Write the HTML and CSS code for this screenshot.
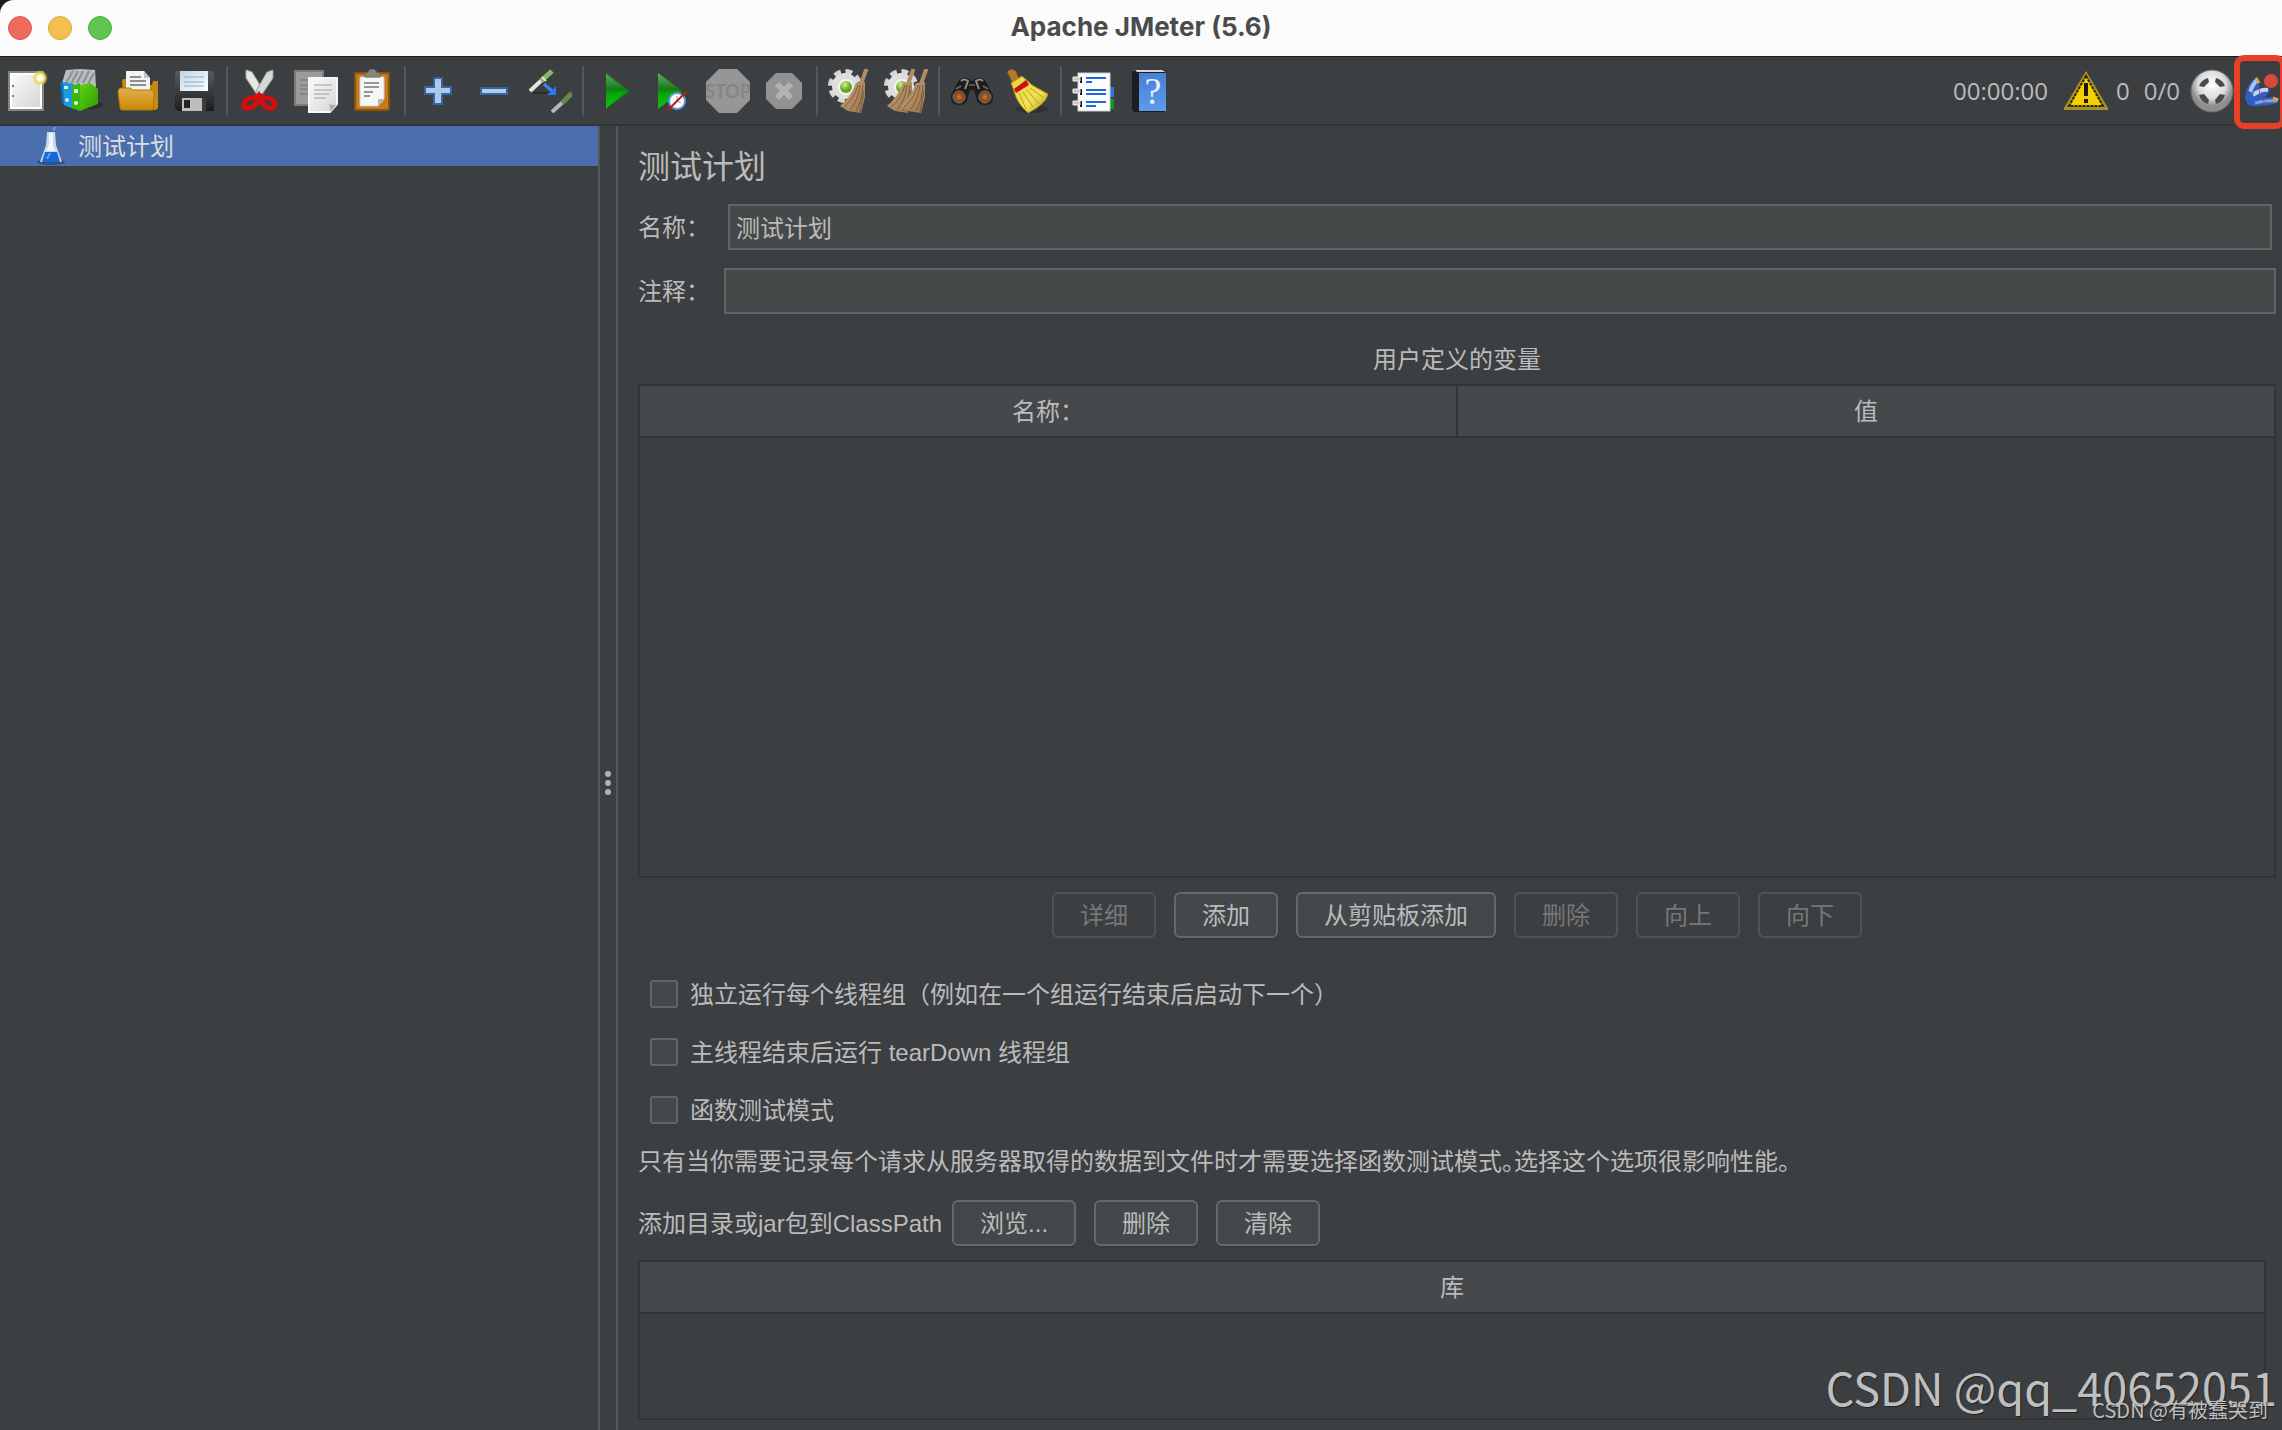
FILE: index.html
```html
<!DOCTYPE html>
<html lang="zh-CN">
<head>
<meta charset="utf-8">
<title>Apache JMeter (5.6)</title>
<link rel="stylesheet" href="styles.css">
</head>
<body>
<svg class="defs" width="0" height="0" aria-hidden="true">
  <defs>
    <linearGradient id="paper" x1="0" y1="0" x2="1" y2="1"><stop offset="0" stop-color="#fafafa"/><stop offset="1" stop-color="#d6d6d6"/></linearGradient>
    <linearGradient id="amber" x1="0" y1="0" x2="0" y2="1"><stop offset="0" stop-color="#e3b04f"/><stop offset="1" stop-color="#c98a06"/></linearGradient>
    <linearGradient id="black" x1="0" y1="0" x2="0" y2="1"><stop offset="0" stop-color="#5b5b5b"/><stop offset="1" stop-color="#1d1d1d"/></linearGradient>
    <linearGradient id="label" x1="0" y1="0" x2="1" y2="1"><stop offset="0" stop-color="#bcd6ea"/><stop offset="1" stop-color="#ffffff"/></linearGradient>
    <linearGradient id="play" x1="0" y1="0" x2="0" y2="1"><stop offset="0" stop-color="#5fae62"/><stop offset=".45" stop-color="#177a1a"/><stop offset=".55" stop-color="#07a307"/><stop offset="1" stop-color="#12c512"/></linearGradient>
    <linearGradient id="green" x1="0" y1="0" x2="1" y2="1"><stop offset="0" stop-color="#5fd30f"/><stop offset="1" stop-color="#2f9a05"/></linearGradient>
    <linearGradient id="book" x1="0" y1="0" x2="0" y2="1"><stop offset="0" stop-color="#4581d6"/><stop offset="1" stop-color="#5c9bea"/></linearGradient>
    <linearGradient id="straw" x1="0" y1="0" x2="1" y2="1"><stop offset="0" stop-color="#c8a47a"/><stop offset="1" stop-color="#9a7650"/></linearGradient>
    <linearGradient id="yellow" x1="0" y1="0" x2="1" y2="1"><stop offset="0" stop-color="#e8d23a"/><stop offset=".6" stop-color="#f2e25a"/><stop offset="1" stop-color="#b59a10"/></linearGradient>
    <radialGradient id="spark"><stop offset="0" stop-color="#fff"/><stop offset=".35" stop-color="#fffbd0"/><stop offset=".6" stop-color="#e8d85a"/><stop offset="1" stop-color="#e8d85a" stop-opacity="0"/></radialGradient>
    <radialGradient id="ball" cx=".4" cy=".3"><stop offset="0" stop-color="#d2f08a"/><stop offset="1" stop-color="#63a51c"/></radialGradient>
    <radialGradient id="silver" cx=".5" cy=".35"><stop offset="0" stop-color="#fff"/><stop offset=".65" stop-color="#dcdcdc"/><stop offset="1" stop-color="#8e8e8e"/></radialGradient>
    <radialGradient id="lens"><stop offset="0" stop-color="#c27a3c"/><stop offset="1" stop-color="#6d3610"/></radialGradient>
    <symbol id="gear" viewBox="0 0 36 36"><circle cx="18" cy="18" r="14" fill="none" stroke="#d6d6d6" stroke-width="6" stroke-dasharray="6.5 4.5"/><circle cx="18" cy="18" r="13" fill="#dedede"/><circle cx="19" cy="19" r="8" fill="#f3f3f3"/><circle cx="19" cy="19" r="6" fill="url(#ball)"/></symbol>
    <symbol id="besom" viewBox="0 0 30 44"><path d="M26 1 L21 15" stroke="#b08c66" stroke-width="4" stroke-linecap="round"/><path d="M16 14 L25 13 L25 28 L21 44 L8 42 L0 37 Q10 29 16 14Z" fill="url(#straw)"/><path d="M18 16 Q14 30 4 38 M20 16 Q18 32 10 41 M23 16 Q22 32 16 42 M24 22 L20 43" stroke="#7d5c3b" stroke-width="1" fill="none"/></symbol>
  </defs>
</svg>

<div class="window">
  <header class="titlebar">
    <div class="lights">
      <button class="light close" aria-label="关闭"></button>
      <button class="light minimize" aria-label="最小化"></button>
      <button class="light zoom" aria-label="缩放"></button>
    </div>
    <div class="title">Apache JMeter (5.6)</div>
  </header>

  <div class="toolbar">
    <div class="tools">
      <button class="tool" aria-label="新建"><svg viewBox="0 0 44 44"><rect x="5" y="3" width="34" height="38" fill="#fff" stroke="#85877f" stroke-width="2"/><rect x="8" y="6" width="28" height="32" fill="url(#paper)"/><path d="M8 17h2M8 27h2" stroke="#777" stroke-width="2"/><circle cx="36" cy="9" r="8" fill="url(#spark)"/></svg></button>
      <button class="tool" aria-label="模板"><svg viewBox="0 0 44 44"><ellipse cx="30" cy="36" rx="13" ry="4" fill="#2c2e30"/><path d="M2 14 L6 1 L20 0 L35 1 L36 18 L12 24Z" fill="#b9bdbf"/><path d="M6 14 L13 2 M11 15 L18 2 M17 14 L23 2 M23 14 L29 2 M28 15 L34 4" stroke="#8a8f93" stroke-width="2"/><path d="M0 13 L8 15 L8 38 L2 34Z" fill="#0b6fb8"/><path d="M3 13 L14 15 L14 40 L4 36Z" fill="#1f97de"/><path d="M12 17 L20 14 L20 42 L12 39Z" fill="#37b80a"/><path d="M20 16 L30 14 L38 20 L38 35 L20 42Z" fill="url(#green)"/><path d="M14 20 h4 v4 h-4z M4 17h4v3h-4z" fill="#d8f5c8"/><circle cx="16" cy="34" r="2" fill="#e4fbd6"/><circle cx="7" cy="31" r="2" fill="#cfeaff"/></svg></button>
      <button class="tool" aria-label="打开"><svg viewBox="0 0 44 44"><path d="M6 12 Q6 10 8 10 H14 V16 H36 L37 12 H42 V38 Q42 41 38 41 H8 Z" fill="#c48a12"/><path d="M10 2 H28 L34 9 V24 H10Z" fill="#f2f2f2"/><path d="M28 2 L34 9 H28Z" fill="#c4c4c4"/><path d="M14 8h11M14 12h16M14 16h16" stroke="#8e8e8e" stroke-width="2"/><path d="M2 23 Q2 19 5 19 H14 L17 21 H36 Q38 21 38 24 L37 41 H6 Q4 41 4 38Z" fill="url(#amber)" stroke="#b37a04"/></svg></button>
      <button class="tool" aria-label="保存"><svg viewBox="0 0 44 44"><path d="M5 2 H40 Q42 2 42 4 V42 H6 L3 39 V4 Q3 2 5 2Z" fill="url(#black)"/><rect x="8" y="2" width="28" height="20" fill="url(#label)"/><path d="M12 8h20M12 13h20M12 17h20" stroke="#8cabc4" stroke-width="1"/><rect x="10" y="29" width="22" height="13" fill="#bdbdbd"/><rect x="12" y="31" width="6" height="8" fill="#222"/><path d="M30 29h4v13h-4z" fill="#3b3b3b"/></svg></button>
    </div>
    <i class="sep"></i>
    <div class="tools">
      <button class="tool" aria-label="剪切"><svg viewBox="0 0 44 44"><path d="M8 1 L14 3 L25 21 L20 27 L8 9Z" fill="#e6e7e4" stroke="#a5a7a3"/><path d="M35 1 L29 3 L18 22 L23 27 L35 9Z" fill="#d6d8d4" stroke="#999b97"/><circle cx="21" cy="23" r="1" fill="#666"/><path d="M20 27 Q19 38 11 39 Q5 40 6 35 Q7 30 13 29 Q17 29 21 26 Q25 29 30 29 Q36 30 37 35 Q37 40 31 39 Q24 38 22 27" fill="none" stroke="#d40d0d" stroke-width="5" stroke-linejoin="round"/></svg></button>
      <button class="tool" aria-label="复制"><svg viewBox="0 0 44 44"><rect x="1" y="2" width="28" height="34" fill="#9a9b9a" stroke="#7a7b7a" stroke-width="2"/><path d="M6 11h9M6 16h9M6 20h9M6 25h9" stroke="#727372" stroke-width="1"/><path d="M15 9 H43 V35 L36 43 H15Z" fill="url(#paper)" stroke="#f7f7f7" stroke-width="2"/><path d="M36 43 Q37 38 35 35 Q40 37 43 35Z" fill="#a8a8a8"/><path d="M20 16h18M20 21h18M20 25h15M20 29h12" stroke="#a0a0a0" stroke-width="1"/></svg></button>
      <button class="tool" aria-label="粘贴"><svg viewBox="0 0 44 44"><rect x="5" y="4" width="34" height="37" rx="1" fill="#c07c1f" stroke="#8b5208" stroke-width="2"/><path d="M10 8 H34 V30 L28 37 H10Z" fill="#f6f6f6" stroke="#d2d2d2"/><path d="M28 37 V30 H34Z" fill="#b4b4b4"/><path d="M14 14h15M14 18h15M14 23h9M14 27h6" stroke="#969696" stroke-width="2"/><path d="M15 7 V4 H18 Q19 0 22 0 Q26 0 27 4 H30 V8 H15Z" fill="#868878" stroke="#6a6c5e"/></svg></button>
    </div>
    <i class="sep"></i>
    <div class="tools">
      <button class="tool" aria-label="全部展开"><svg viewBox="0 0 44 44"><path d="M18 9 H26 V18 H35 V25 H26 V35 H18 V25 H9 V18 H18Z" fill="#b0c8e6" stroke="#3465a4" stroke-width="2"/></svg></button>
      <button class="tool" aria-label="全部折叠"><svg viewBox="0 0 44 44"><rect x="9" y="19" width="26" height="6" fill="#b4cae6" stroke="#3465a4" stroke-width="2"/></svg></button>
      <button class="tool" aria-label="切换"><svg viewBox="0 0 44 44"><path d="M4 24h18" stroke="#2b2d2e" stroke-width="2"/><path d="M2 22 L16 9" stroke="#e6e6e6" stroke-width="4"/><path d="M13 12 L24 2" stroke="#86b862" stroke-width="5"/><path d="M14 8 L18 12" stroke="#d8e8cc" stroke-width="2"/><path d="M16 15 L24 22" stroke="#3a87ee" stroke-width="3"/><path d="M28 17 V26 H19Z" fill="#2678ee"/><path d="M24 43 L36 32" stroke="#b6b6b6" stroke-width="4"/><path d="M34 34 L44 24" stroke="#648a4c" stroke-width="5"/></svg></button>
    </div>
    <i class="sep"></i>
    <div class="tools">
      <button class="tool" aria-label="启动"><svg viewBox="0 0 44 44"><path d="M12 4 L36 22 L12 40Z" fill="url(#play)"/><path d="M13 5 L35 22 L13 39" fill="none" stroke="#0d6d12" stroke-width="1"/></svg></button>
      <button class="tool" aria-label="不停顿开始"><svg viewBox="0 0 44 44"><path d="M8 4 L32 22 L8 40Z" fill="url(#play)"/><circle cx="27" cy="32" r="8" fill="#fff" stroke="#5c9bd8" stroke-width="2"/><path d="M27 32 V27 M27 32 L31 34" stroke="#999" stroke-width="1"/><path d="M18 41 L36 23" stroke="#c81818" stroke-width="2"/></svg></button>
      <button class="tool" aria-label="停止" disabled><svg viewBox="0 0 44 44"><path d="M13 0 H31 L44 13 V31 L31 44 H13 L0 31 V13Z" fill="#969696"/><text x="22" y="29" class="stop-word">STOP</text></svg></button>
      <button class="tool" aria-label="关闭" disabled><svg viewBox="0 0 44 44"><path d="M14 4 H30 L40 14 V30 L30 40 H14 L4 30 V14Z" fill="#929292"/><path d="M15 15 L29 29 M29 15 L15 29" stroke="#b2b2b2" stroke-width="6"/></svg></button>
    </div>
    <i class="sep"></i>
    <div class="tools">
      <button class="tool" aria-label="清除"><svg viewBox="0 0 44 44"><use href="#gear" x="-1" y="-1" width="36" height="36"/><use href="#besom" x="12" y="0" width="30" height="44"/></svg></button>
      <button class="tool" aria-label="清除全部"><svg viewBox="0 0 44 44"><use href="#gear" x="-1" y="-1" width="36" height="36"/><use href="#besom" x="3" y="0" width="30" height="44"/><use href="#besom" x="16" y="0" width="30" height="44"/></svg></button>
    </div>
    <i class="sep"></i>
    <div class="tools">
      <button class="tool" aria-label="查找"><svg viewBox="0 0 44 44"><path d="M1 26 L9 11 Q14 7 19 10 L22 12 L25 10 Q31 7 35 11 L43 26 Q44 36 35 36 Q27 36 26 28 L24 21 H20 L18 28 Q17 36 9 36 Q0 36 1 26Z" fill="#1d1d1d"/><path d="M11 12 Q14 9 18 12 L15 20 M33 12 Q30 9 26 12 L29 20" stroke="#8c8c8c" stroke-width="2" fill="none"/><path d="M6 20 L11 17 M38 20 L33 17" stroke="#666" stroke-width="2"/><path d="M19 16h6" stroke="#555" stroke-width="2"/><circle cx="9" cy="28" r="6" fill="url(#lens)" stroke="#7f7f7f"/><circle cx="35" cy="28" r="6" fill="url(#lens)" stroke="#7f7f7f"/></svg></button>
      <button class="tool" aria-label="清除查找"><svg viewBox="0 0 44 44"><ellipse cx="26" cy="40" rx="17" ry="4" fill="#303234"/><path d="M1 3 Q4 -2 10 2 L14 12 L7 15Z" fill="#b07a35" stroke="#7a4d16"/><path d="M5 14 L16 7 L26 16 L42 25 Q40 35 22 44 Q10 33 8 22Z" fill="url(#yellow)" stroke="#a68c0c"/><path d="M13 24 L20 40 M17 23 L27 38 M21 21 L33 35 M24 19 L38 29" stroke="#b9a21b" stroke-width="1"/><path d="M8 20 L20 11 L23 16 L10 24Z" fill="#c81212"/></svg></button>
    </div>
    <i class="sep"></i>
    <div class="tools">
      <button class="tool" aria-label="函数助手"><svg viewBox="0 0 44 44"><rect x="36" y="18" width="6" height="10" fill="#2a78dc"/><rect x="36" y="30" width="6" height="10" fill="#139a13"/><rect x="6" y="4" width="32" height="38" fill="#fdfdfd" stroke="#ccc" stroke-width="1"/><path d="M14 9h20M14 13h6M14 21h20M14 25h20M14 33h20M14 37h10" stroke="#1d68e0" stroke-width="2"/><path d="M8 8h2v6h-2zM8 20h2v6h-2zM8 32h2v6h-2z" fill="#111"/><path d="M1 8h7v4h-7zM1 20h7v4h-7zM1 32h7v4h-7z" fill="#c8c8c8" stroke="#f0f0f0"/></svg></button>
      <button class="tool" aria-label="帮助"><svg viewBox="0 0 44 44"><path d="M4 4 L7 1 H34 L38 4 V41 L36 43 H6 L4 40Z" fill="#1d1d1f"/><path d="M7 1 H34 L37 3 H9Z" fill="#d8d8d8"/><path d="M11 4 H38 V42 H11Z" fill="url(#book)"/><text x="25" y="35" class="help-mark">?</text></svg></button>
    </div>

    <div class="status">
      <span class="timer">00:00:00</span>
      <button class="tool" aria-label="日志"><svg viewBox="0 0 44 44"><path d="M22 2 L44 39 V41 H0 V39Z" fill="#a8922a"/><path d="M22 7 L39 37 H5Z" fill="#f7cf00" stroke="#2a2606" stroke-width="2" stroke-dasharray="3 1"/><path d="M20 14 H24 V27 H20Z M20 30 H24 V34 H20Z" fill="#1c1a06"/></svg></button>
      <span class="errors">0</span>
      <span class="threads">0/0</span>
      <button class="tool" aria-label="远程状态"><svg viewBox="0 0 44 44"><circle cx="22" cy="22" r="21" fill="url(#silver)" stroke="#6e6e6e"/><path d="M9 17 Q11 11 18 9 L19 13 L14 18Z M26 9 Q33 11 35 17 L30 18 L25 13Z M9 26 L14 25 L19 31 L18 35 Q11 33 9 26Z M35 26 Q33 33 26 35 L25 31 L30 25Z" fill="#4a4a4a"/></svg></button>
      <div class="plugin">
        <button class="tool" aria-label="插件管理"><svg viewBox="0 0 44 44"><path d="M0 28 Q2 12 12 7 Q16 11 13 20 Q20 15 25 20 Q22 27 16 29 Q28 25 34 29 Q34 36 8 36 Q2 36 0 28Z" fill="#2c5fc8"/><path d="M5 22 Q8 14 12 10" stroke="#a9c4f2" stroke-width="4" fill="none"/><path d="M8 25 Q16 19 23 20" stroke="#c0d2f4" stroke-width="4" fill="none"/><path d="M10 33 Q22 30 32 31" stroke="#7f9fd6" stroke-width="3" fill="none"/><path d="M3 21 L9 24 M14 20 L16 26 M18 29 L20 34" stroke="#c8385a" stroke-width="1"/><path d="M11 8 L14 13 M28 28 L33 30" stroke="#e0a050" stroke-width="3"/><circle cx="26" cy="11" r="7" fill="#d64a3c"/></svg></button>
      </div>
    </div>
  </div>

  <div class="workspace">
    <nav class="tree">
      <a class="node" href="#plan">
        <svg class="flask" viewBox="0 0 28 38"><ellipse cx="14" cy="35" rx="14" ry="3" fill="#33507f"/><path d="M16 3 L19 0" stroke="#8899b5" stroke-width="2"/><path d="M10 5 H18 L19 18 L25 35 H3 L9 18Z" fill="#c8d6e8"/><path d="M12 6 H16 V18 L18 24 H9 L12 17Z" fill="#f2f5f8"/><path d="M8 25 H20 L23 35 H5Z" fill="#1668d8"/><path d="M12 26h2l-3 6h-2z" fill="#5fa6f5"/></svg>
        <span>测试计划</span>
      </a>
    </nav>
    <div class="splitter"><i></i><i></i><i></i></div>

    <main class="editor" id="plan">
      <h1>测试计划</h1>
      <div class="field name-field">
        <label for="name">名称<span class="colon">：</span></label>
        <input id="name" type="text" value="测试计划">
      </div>
      <div class="field">
        <label for="comments">注释<span class="colon">：</span></label>
        <input id="comments" type="text">
      </div>

      <h2 id="vars">用户定义的变量</h2>
      <div class="grid variables">
        <table aria-labelledby="vars">
          <thead><tr><th scope="col">名称<span class="colon">：</span></th><th scope="col">值</th></tr></thead>
        </table>
      </div>
      <div class="actions">
        <button class="btn" disabled>详细</button>
        <button class="btn">添加</button>
        <button class="btn">从剪贴板添加</button>
        <button class="btn" disabled>删除</button>
        <button class="btn" disabled>向上</button>
        <button class="btn" disabled>向下</button>
      </div>

      <div class="options">
        <label class="option"><input type="checkbox"><span>独立运行每个线程组（例如在一个组运行结束后启动下一个）</span></label>
        <label class="option"><input type="checkbox"><span>主线程结束后运行 tearDown 线程组</span></label>
        <label class="option"><input type="checkbox"><span>函数测试模式</span></label>
      </div>
      <p class="note">只有当你需要记录每个请求从服务器取得的数据到文件时才需要选择函数测试模式。选择这个选项很影响性能。</p>

      <div class="classpath">
        <span>添加目录或jar包到ClassPath</span>
        <div class="actions">
          <button class="btn">浏览...</button>
          <button class="btn">删除</button>
          <button class="btn">清除</button>
        </div>
      </div>
      <div class="grid library">
        <table>
          <thead><tr><th scope="col">库</th></tr></thead>
        </table>
      </div>
    </main>
  </div>

  <div class="watermark large">CSDN @qq_40652051</div>
  <div class="watermark small">CSDN @有被蠢哭到</div>
</div>
</body>
</html>
```
FILE: styles.css
```css
* { box-sizing: border-box; }

body {
  margin: 0;
  background: #1d1a1e;
  color: #bbbbbb;
  font: 24px/36px "Liberation Sans", "Noto Sans CJK SC", sans-serif;
}

.defs { position: absolute; }

.window {
  position: relative;
  display: flex;
  flex-direction: column;
  min-height: 100vh;
  overflow: hidden;
  border-top-left-radius: 14px;
  background: #3c3f41;
}

/* Title bar */
.titlebar {
  display: grid;
  grid-template-columns: 1fr auto 1fr;
  align-items: center;
  height: 56px;
  padding: 0 8px;
  background: #fbfbfb;
}

.lights { display: flex; gap: 16px; }

.light {
  width: 24px;
  height: 24px;
  padding: 0;
  border: 1px solid;
  border-radius: 50%;
}

.close { background: #ed6a5e; border-color: #d55a4f; }
.minimize { background: #f5bf4f; border-color: #dca73c; }
.zoom { background: #61c554; border-color: #50ae43; }

.title {
  padding-bottom: 2px;
  color: #4b4b4b;
  font: bold 26px/36px Inter, sans-serif;
}

/* Toolbar */
.toolbar {
  display: flex;
  align-items: center;
  gap: 10px;
  height: 70px;
  padding-left: 4px;
  border-top: 1px solid #1c1f21;
  border-bottom: 2px solid #323537;
}

.tools { display: flex; gap: 12px; }

.sep { width: 2px; height: 50px; background: #555555; }

.tool {
  width: 44px;
  height: 44px;
  padding: 0;
  border: 0;
  background: none;
}

.tool svg { display: block; width: 44px; height: 44px; }

.stop-word {
  fill: #858585;
  font: bold 18px Lato, sans-serif;
  text-anchor: middle;
}

.help-mark {
  fill: #e8f0fc;
  font: 38px "Liberation Serif", serif;
  text-anchor: middle;
}

.status {
  display: flex;
  align-items: center;
  gap: 8px;
  margin-left: auto;
  font-family: "Open Sans", sans-serif;
}

.timer { margin-right: 8px; }
.threads { margin: 0 2px 0 6px; }

/* The frame runs into the window's right edge */
.plugin {
  display: flex;
  flex: none;
  align-items: center;
  width: 52px;
  height: 74px;
  margin: 2px -4px 0 -8px;
  padding-left: 5px;
  border: 6px solid #e94128;
  border-radius: 10px;
}

.plugin .tool { flex: none; }

/* Workspace */
.workspace { display: flex; flex: 1; }

.tree { flex: 0 0 598px; }

.node {
  display: flex;
  align-items: center;
  gap: 13px;
  height: 40px;
  padding-left: 37px;
  background: #4b6eaf;
  color: #dddddd;
  text-decoration: none;
}

.node span, .field label, .option span, .classpath > span { padding-top: 2px; }

.flask { width: 28px; height: 38px; }

.splitter {
  flex: 0 0 20px;
  display: flex;
  flex-direction: column;
  align-items: center;
  justify-content: center;
  gap: 3px;
  padding-top: 10px;
  border: solid #555555;
  border-width: 0 2px;
}

.splitter i {
  width: 6px;
  height: 6px;
  border-radius: 50%;
  background: #b0b2b3;
}

.editor {
  flex: 1;
  display: flex;
  flex-direction: column;
  padding: 17px 6px 10px 20px;
}

h1 { margin: 0 0 13px; font-size: 32px; line-height: 48px; font-weight: normal; }

h2 {
  margin: 28px 0 6px;
  font-size: 24px;
  line-height: 36px;
  font-weight: normal;
  text-align: center;
}

.field { display: flex; align-items: center; }
.field + .field { margin-top: 18px; }
.field label { flex: 0 0 86px; }
.name-field { padding-right: 4px; }
.name-field label { flex-basis: 90px; }

.colon { font-family: "Noto Sans CJK TC", sans-serif; line-height: 1; }

.field input {
  flex: 1;
  height: 46px;
  padding: 0 6px 2px;
  border: 2px solid #646464;
  background: #45494a;
  color: inherit;
  font: inherit;
}

.grid { border: 2px solid #323537; }

.grid table { width: 100%; border-collapse: collapse; table-layout: fixed; }

.grid th {
  height: 51px;
  padding: 2px 0 0;
  border-bottom: 2px solid #323537;
  background: #45494b;
  font-weight: normal;
}

.grid th + th { border-left: 2px solid #323537; }

.variables { flex: 1 0 120px; }
.library { min-height: 160px; margin-right: 10px; }

.actions { display: flex; justify-content: center; gap: 18px; }
.variables + .actions { margin-top: 14px; }

.btn {
  height: 46px;
  padding: 2px 26px 0;
  border: 2px solid #686868;
  border-radius: 6px;
  background: #43494a;
  box-shadow: 0 3px 0 #363a3a;
  color: inherit;
  font: inherit;
  line-height: 36px;
}

.btn:disabled {
  border-color: #545352;
  background: none;
  box-shadow: none;
  color: #777777;
}

.options {
  display: flex;
  flex-direction: column;
  align-items: flex-start;
  gap: 18px;
  margin: 36px 0 14px 12px;
}

.option { display: flex; align-items: center; gap: 12px; height: 40px; }

.option input {
  appearance: none;
  width: 28px;
  height: 28px;
  margin: 0;
  border: 2px solid #646464;
  border-radius: 3px;
  background: #43494a;
}

.note { margin: 0 0 20px; font-feature-settings: "halt"; }

.classpath { display: flex; align-items: center; gap: 10px; margin-bottom: 14px; }

/* Watermarks lie over the page corner */
.watermark {
  position: absolute;
  color: #bfbfbf;
  font-family: "Noto Sans CJK SC", sans-serif;
  text-shadow: 1px 1px 1px #222222;
  white-space: nowrap;
}

.large { right: 5px; bottom: 11px; font-size: 45px; line-height: 64px; }
.small { right: 14px; bottom: 5px; font-size: 20px; line-height: 30px; }
```
